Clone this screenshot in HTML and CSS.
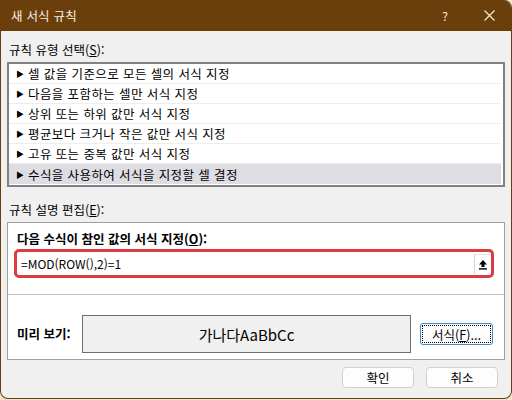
FILE: index.html
```html
<!DOCTYPE html>
<html lang="ko">
<head>
<meta charset="utf-8">
<title>새 서식 규칙</title>
<link rel="stylesheet" href="styles.css">
</head>
<body>
<div class="window">
  <div class="titlebar">
    <span class="title">새 서식 규칙</span>
    <span class="help">?</span>
    <svg class="close" width="11" height="11" viewBox="0 0 11 11"><path d="M0.5 0.5 L10.5 10.5 M10.5 0.5 L0.5 10.5" stroke="#f6efe0" stroke-width="1.1" fill="none"/></svg>
  </div>
  <div class="content">
    <div class="label first">규칙 유형 선택(<u>S</u>):</div>
    <div class="listbox">
      <div class="row"><span class="tri">▶</span>셀 값을 기준으로 모든 셀의 서식 지정</div>
      <div class="row"><span class="tri">▶</span>다음을 포함하는 셀만 서식 지정</div>
      <div class="row"><span class="tri">▶</span>상위 또는 하위 값만 서식 지정</div>
      <div class="row"><span class="tri">▶</span>평균보다 크거나 작은 값만 서식 지정</div>
      <div class="row"><span class="tri">▶</span>고유 또는 중복 값만 서식 지정</div>
      <div class="row selected"><span class="tri">▶</span>수식을 사용하여 서식을 지정할 셀 결정</div>
    </div>
    <div class="label second">규칙 설명 편집(<u>E</u>):</div>
    <div class="group">
      <div class="bold-label">다음 수식이 참인 값의 서식 지정(<u>O</u>):</div>
      <div class="formula">
        <span class="formula-text">=MOD(ROW(),2)=1</span>
        <span class="collapse">
          <svg width="10" height="11" viewBox="0 0 10 11"><path d="M5 1 L1 5.5 H3.5 V8 H6.5 V5.5 H9 Z" fill="#000"/><rect x="1" y="9.2" width="8" height="1.4" fill="#000"/></svg>
        </span>
      </div>
      <div class="separator"></div>
      <div class="preview-row">
        <div class="bold-label preview-label">미리 보기:</div>
        <div class="preview">가나다AaBbCc</div>
        <div class="btn format-btn"><span class="focus">서식(<u>F</u>)...</span></div>
      </div>
    </div>
    <div class="buttons">
      <div class="btn">확인</div>
      <div class="btn">취소</div>
    </div>
  </div>
</div>
</body>
</html>
```
FILE: styles.css
```css
html, body {
  margin: 0;
  padding: 0;
}
body {
  width: 512px;
  height: 400px;
  overflow: hidden;
  background: #f3e7d3;
  font-family: "Noto Sans CJK KR", "Noto Sans", sans-serif;
  font-size: 12.5px;
  color: #000;
}
.window {
  width: 510px;
  height: 398px;
  border: 1px solid #6b3f0c;
  border-top: none;
  border-radius: 0 8px 8px 8px;
  background: #f0f0f0;
  overflow: hidden;
}
.titlebar {
  height: 31px;
  background: #6b3f0c;
  display: flex;
  align-items: center;
  color: #f6efe0;
  padding: 0 0 0 10px;
}
.title {
  font-size: 12.5px;
  letter-spacing: 0.2px;
  flex: 1;
}
.help {
  font-size: 12px;
  margin-right: 36px;
}
.close {
  margin-right: 16px;
}
.content {
  padding: 0 6px;
}
.label {
  line-height: 16px;
  padding-left: 2px;
}
.label.first {
  margin-top: 11px;
}
.label.second {
  margin-top: 15px;
}
u {
  text-decoration: underline;
  text-underline-offset: 1px;
}
.listbox {
  margin-top: 4px;
  border: 2px solid #828282;
  background: #fff;
  padding-bottom: 1px;
}
.row {
  height: 20px;
  box-sizing: border-box;
  border-bottom: 1px solid #ededed;
  display: flex;
  align-items: center;
  margin-right: 2px;
  padding-left: 7px;
  line-height: 19px;
  letter-spacing: 0.4px;
}
.row.selected {
  background: #dedde3;
  border-bottom: none;
}
.tri {
  font-size: 8px;
  width: 12px;
  display: inline-block;
  letter-spacing: 0;
}
.group {
  margin-top: 4px;
  border: 1px solid #a0a0a0;
  background: #fff;
  padding: 8px 10px 6px 6px;
}
.bold-label {
  font-weight: bold;
  line-height: 16px;
  margin-left: 3px;
}
.formula {
  margin-top: 2px;
  height: 29px;
  box-sizing: border-box;
  border: 3px solid #dc3b3f;
  border-radius: 5px;
  display: flex;
  align-items: center;
  padding-left: 4px;
  padding-right: 1px;
}
.formula-text {
  flex: 1;
  font-size: 12px;
}
.collapse {
  width: 16px;
  height: 20px;
  box-sizing: border-box;
  border-left: 1px solid #d6d6d6;
  border-top: 1px solid #e6e6e6;
  display: flex;
  align-items: center;
  justify-content: center;
}
.separator {
  height: 1px;
  background: #c4c4c4;
  margin: 16px -10px 0 -6px;
}
.preview-row {
  display: flex;
  align-items: center;
  margin-top: 20px;
}
.preview-label {
  width: 65px;
}
.preview {
  width: 329px;
  height: 38px;
  box-sizing: border-box;
  border: 1px solid #6e6e6e;
  background: #f0f0f0;
  display: flex;
  align-items: center;
  justify-content: center;
  font-size: 15px;
}
.btn {
  width: 72px;
  height: 21px;
  box-sizing: border-box;
  border: 1px solid #d0d0d0;
  border-radius: 4px;
  background: #fdfdfd;
  display: flex;
  align-items: center;
  justify-content: center;
  font-size: 12.5px;
}
.format-btn {
  width: 73px;
  height: 22px;
  margin-left: 9px;
  border: 1px solid #3d8bc9;
  border-radius: 3px;
  padding: 1px;
}
.format-btn .focus {
  flex: 1;
  align-self: stretch;
  border: 1px dotted #000;
  display: flex;
  align-items: center;
  justify-content: center;
}
.buttons {
  display: flex;
  justify-content: flex-end;
  gap: 12px;
  margin-top: 7px;
  margin-right: 7px;
}
```
